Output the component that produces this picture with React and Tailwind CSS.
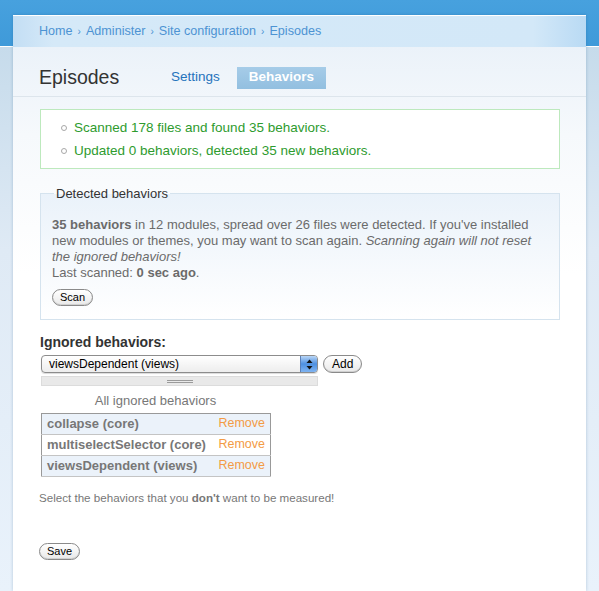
import React from 'react';

const font = { fontFamily: '"Liberation Sans", Arial, sans-serif' };

// Mac-style pill button
const PillButton = ({ children, className = '' }) => (
  <button
    className={`rounded-full border border-[#8a8a8a] bg-[linear-gradient(to_bottom,#ffffff,#e9e9e9)] px-[7px] text-[11px] leading-none text-black shadow-[inset_0_-1px_0_#d0d0d0] ${className}`}
  >
    {children}
  </button>
);

const Bullet = () => (
  <span className="inline-block h-[6px] w-[6px] rounded-full border border-[#a8a8a8] bg-white" />
);

const ignored = [
  { name: 'collapse (core)', odd: true },
  { name: 'multiselectSelector (core)', odd: false },
  { name: 'viewsDependent (views)', odd: true },
];

export default function App() {
  return (
    <div
      style={font}
      className="min-h-[591px] w-full bg-[linear-gradient(to_bottom,#47a1de_0px,#3f9ad9_46px,#ffffff_46px,#ffffff_47px,#c6dbeb_47px,#dfeaf5_250px,#e9f2fb_100%)] px-[13px] pt-[15px]"
    >
      <div className="min-h-[576px] bg-[linear-gradient(to_bottom,#ffffff_0,#ffffff_32px,#ebf2f9_32px,#f6f9fc_120px,#ffffff_260px)] shadow-[0_0_3px_rgba(20,70,120,0.25)]">
        {/* breadcrumb */}
        <div className="flex h-[32px] items-center border-t border-white bg-[linear-gradient(to_right,#c3def4_0px,#d5e9f8_40px,#d3e8f8_520px,#b9daf4_100%)] pl-[26px] text-[12.6px] text-[#4d93d3]">
          <span>Home</span>
          <span className="mx-[5px] text-[10px]">›</span>
          <span>Administer</span>
          <span className="mx-[5px] text-[10px]">›</span>
          <span>Site configuration</span>
          <span className="mx-[5px] text-[10px]">›</span>
          <span>Episodes</span>
        </div>

        {/* title + tabs */}
        <div className="flex h-[50px] items-center border-b border-[#dde5ec] pl-[26px] pt-[12px]">
          <h1 className="w-[132px] text-[19.5px] leading-none text-[#333]">Episodes</h1>
          <span className="text-[13.5px] text-[#2573bc]">Settings</span>
          <span className="ml-[17px] flex h-[22px] items-center bg-[linear-gradient(to_bottom,#a6cce8,#92bfe0)] px-[12px] text-[13.5px] font-bold text-white">
            Behaviors
          </span>
        </div>

        <div className="pl-[27px] pr-[26px] pt-[12px]">
          {/* status messages */}
          <div className="flex h-[60px] flex-col justify-center gap-[3px] border border-[#bde9bd] bg-white pl-[20px] text-[13.5px] leading-[20px] text-[#2e9b2e]">
            <div className="flex items-center gap-[7px]">
              <Bullet />
              <span>Scanned 178 files and found 35 behaviors.</span>
            </div>
            <div className="flex items-center gap-[7px]">
              <Bullet />
              <span>Updated 0 behaviors, detected 35 new behaviors.</span>
            </div>
          </div>

          {/* detected behaviors */}
          <fieldset className="mt-[15px] h-[136px] border border-[#d5e3ee] bg-[linear-gradient(to_bottom,#eaf2fa,#ffffff)] px-[11px]">
            <legend className="ml-[2px] px-[2px] text-[13px] text-[#333]">Detected behaviors</legend>
            <p className="mt-[13px] text-[13px] leading-[16px] text-[#6b6b6b]">
              <b>35 behaviors</b> in 12 modules, spread over 26 files were detected. If you've installed
              <br />
              new modules or themes, you may want to scan again.{' '}
              <i>Scanning again will not reset</i>
              <br />
              <i>the ignored behaviors!</i>
              <br />
              Last scanned: <b>0 sec ago</b>.
            </p>
            <PillButton className="mt-[8px] h-[17px]">Scan</PillButton>
          </fieldset>

          {/* ignored behaviors */}
          <div className="mt-[14px] text-[14px] font-bold leading-[17px] text-[#333]">Ignored behaviors:</div>
          <div className="mt-[4px] flex items-center gap-[5px] pl-[1px]">
            <div className="flex h-[18px] w-[277px] items-center overflow-hidden rounded-[4px] border border-[#8c8c8c] bg-[linear-gradient(to_bottom,#ffffff,#ededed)] shadow-[0_1px_1px_rgba(0,0,0,0.15)]">
              <span className="flex-1 pl-[7px] text-[12px] text-black">viewsDependent (views)</span>
              <span className="flex h-full w-[17px] flex-col items-center justify-center gap-[2px] border-l border-[#5b80b8] bg-[linear-gradient(to_bottom,#b9d6f6,#4d8fe0_50%,#7fb4f2)]">
                <svg width="7" height="11" viewBox="0 0 7 11">
                  <path d="M3.5 0.5 L6.5 4 H0.5 Z" fill="#111" />
                  <path d="M3.5 10.5 L6.5 7 H0.5 Z" fill="#111" />
                </svg>
              </span>
            </div>
            <PillButton className="h-[18px] px-[8px] text-[12px]">Add</PillButton>
          </div>
          <div className="ml-[1px] mt-[3px] flex h-[10px] w-[277px] items-center justify-center border border-[#dcdcdc] bg-[#e9e9e9]">
            <span className="flex w-[26px] flex-col gap-[1px]">
              <span className="h-px bg-[#9a9a9a]" />
              <span className="h-px bg-[#9a9a9a]" />
            </span>
          </div>

          <div className="mt-[5px] w-[230px] pl-[1px] text-center text-[13px] text-[#777]">All ignored behaviors</div>
          <table className="ml-[1px] mt-[2px] w-[230px] border-collapse border border-[#999]">
            <tbody>
              {ignored.map((row) => (
                <tr
                  key={row.name}
                  className={`h-[21px] border-b border-[#c4c4c4] ${row.odd ? 'bg-[#ebf2fa]' : 'bg-white'}`}
                >
                  <td className="pl-[5px] text-[13px] font-bold text-[#777]">{row.name}</td>
                  <td className="pr-[5px] text-right text-[12.5px] text-[#f39b45]">Remove</td>
                </tr>
              ))}
            </tbody>
          </table>

          <p className="ml-[-1px] mt-[12px] text-[11.6px] text-[#777]">
            Select the behaviors that you <b>don't</b> want to be measured!
          </p>

          <PillButton className="ml-[-1px] mt-[37px] h-[17px]">Save</PillButton>
        </div>
      </div>
    </div>
  );
}
